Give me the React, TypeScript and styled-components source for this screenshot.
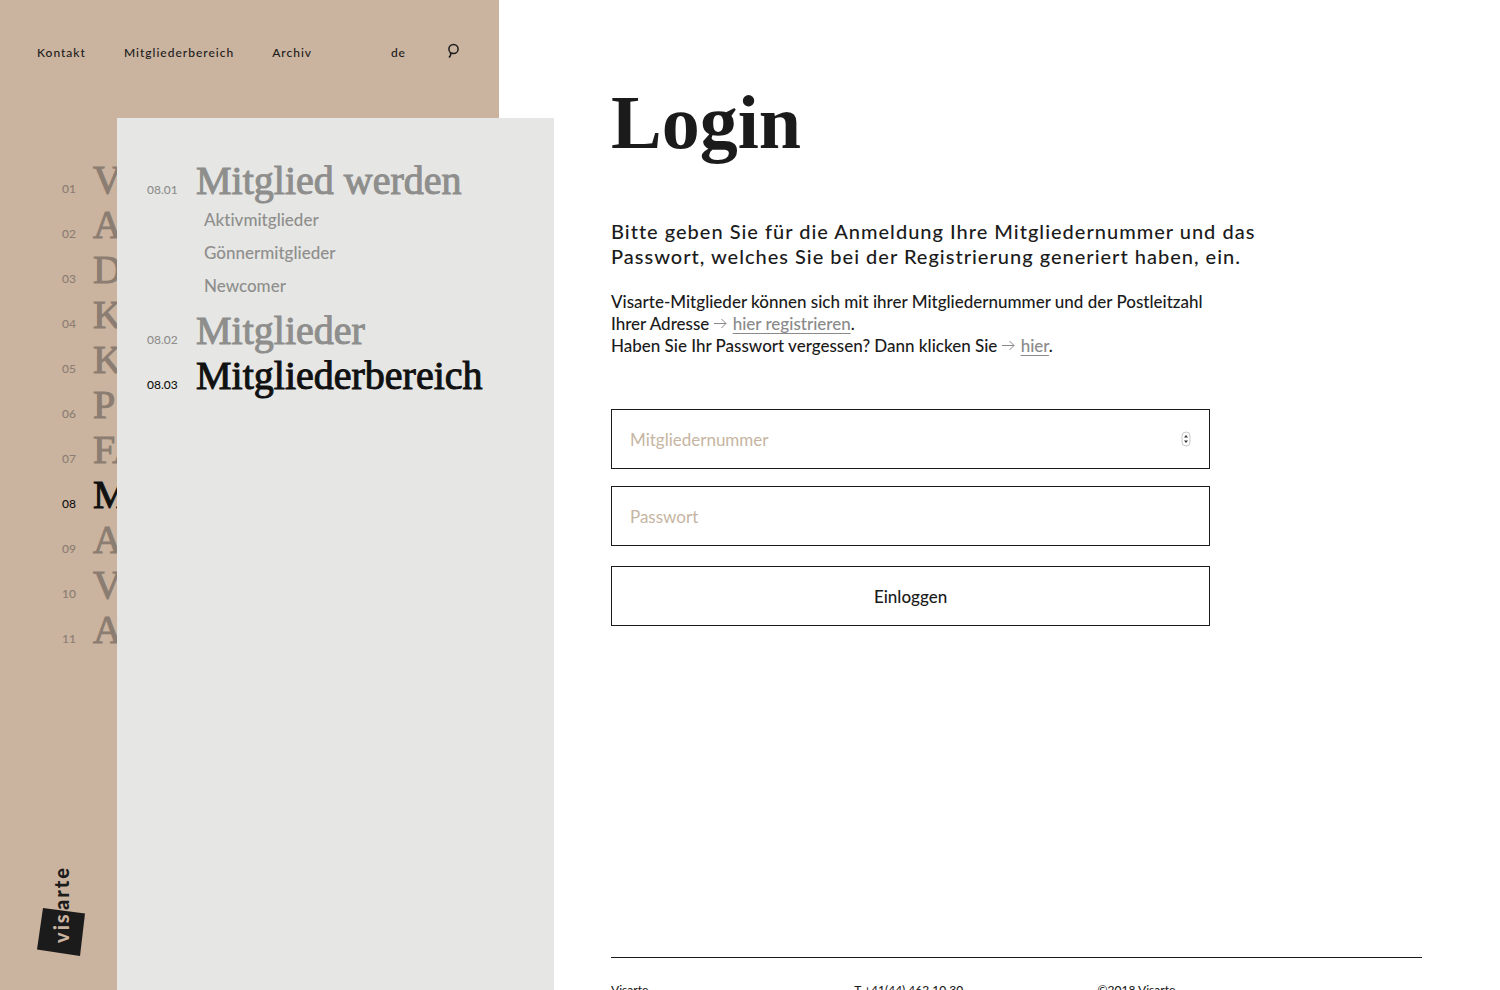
import React from "react";
import styled, { createGlobalStyle } from "styled-components";

const ink = "#1b1b1b";
const sans = `Lato, "Liberation Sans", sans-serif`;
const serif = `"Liberation Serif", "Times New Roman", serif`;

const GlobalStyle = createGlobalStyle`
  *, *::before, *::after { box-sizing: border-box; }
  body {
    margin: 0;
    background: #fff;
    color: ${ink};
    font-family: ${sans};
    font-weight: 500;
    font-variant-ligatures: none;
  }
  a { color: inherit; text-decoration: none; }
  ul { list-style: none; margin: 0; padding: 0; }
`;

const Page = styled.div`
  position: relative;
  display: grid;
  grid-template-columns: calc(100% / 3 - 1px) 1fr;
  height: 100vh;
  overflow: hidden;
`;

const Sidebar = styled.aside`
  display: flex;
  flex-direction: column;
  background: #cab39f;
`;

const TopNav = styled.nav`
  display: flex;
  align-items: center;
  gap: 38px;
  height: 106px;
  padding: 0 39px 0 37px;
  font-size: 12px;
  line-height: 16px;
  letter-spacing: 1px;
`;

const Language = styled.a`
  margin-left: auto;
`;

const SearchButton = styled.button`
  display: flex;
  padding: 0 0 4px;
  border: 0;
  background: none;
  color: ${ink};
`;

const MainMenu = styled.ul`
  padding: 52px 0 0 62px;
`;

const MenuLink = styled.a<{ $active?: boolean; $indent: number }>`
  display: grid;
  grid-template-columns: ${(p) => p.$indent}px 1fr;
  align-items: baseline;
  height: 45px;
  color: ${(p) => (p.$active ? "#111" : "inherit")};
`;

const MenuNumber = styled.span`
  font-size: 12px;
`;

const MenuTitle = styled.span`
  font-family: ${serif};
  font-size: 40px;
  line-height: 44px;
  -webkit-text-stroke: 1px currentColor;
`;

const MutedItem = styled.li<{ $tone: string }>`
  color: ${(p) => p.$tone};
`;

const LogoLink = styled.a`
  margin: auto 0 32px 36px;
  line-height: 0;
`;

const SubPanel = styled.nav`
  position: absolute;
  top: 118px;
  bottom: 0;
  left: 117px;
  width: calc(37% - 118px);
  padding: 41px 0 0 30px;
  background: #e6e6e4;
`;

const SubList = styled.ul`
  margin-top: -1px;
  padding: 0 0 7px 57px;
  font-size: 17px;
  line-height: 33px;
`;

const Main = styled.main`
  height: 100vh;
  padding: 0 78px 0 112px;
  overflow-y: auto;
  scrollbar-width: none;
`;

const Content = styled.div`
  min-height: calc(100vh - 33px);
  padding-top: 77px;
`;

const Title = styled.h1`
  margin: 0 0 52px;
  font-family: ${serif};
  font-size: 76px;
  font-weight: 700;
  line-height: 90px;
`;

const Lead = styled.p`
  max-width: 680px;
  margin: 0 0 22px;
  font-size: 20px;
  line-height: 25px;
  letter-spacing: 1px;
`;

const Copy = styled.p`
  margin: 0 0 52px;
  font-size: 17px;
  line-height: 22px;
`;

const TextLink = styled.a`
  color: #8a8a8a;

  span {
    text-decoration: underline;
    text-decoration-thickness: 1px;
    text-underline-offset: 3px;
    text-decoration-skip-ink: none;
  }
`;

const LinkArrow = styled.svg`
  margin-right: 6px;
`;

const Form = styled.form`
  display: flex;
  flex-direction: column;
  gap: 17px;
  width: calc(74% - 1px);
`;

const Field = styled.label`
  position: relative;
  display: block;
`;

const Input = styled.input`
  display: block;
  width: 100%;
  height: 60px;
  padding: 0 18px;
  border: 1px solid ${ink};
  border-radius: 0;
  background: #fff;
  color: ${ink};
  font: 400 17px ${sans};

  &::placeholder {
    color: #c6b5a2;
    opacity: 1;
  }
`;

const Stepper = styled.svg`
  position: absolute;
  top: 22px;
  right: 18px;
`;

const Submit = styled.button`
  height: 60px;
  margin-top: 3px;
  border: 1px solid ${ink};
  background: #fff;
  color: ${ink};
  font: 500 17px ${sans};
`;

const Footer = styled.footer`
  display: grid;
  grid-template-columns: 30% 30% 1fr;
  padding: 24px 0 48px;
  border-top: 1px solid ${ink};
  font-size: 12px;
  line-height: 16px;
`;

const mainItems = ["V", "A", "D", "K", "K", "P", "FA", "M", "A", "Vo", "A"];
const subPages = ["Aktivmitglieder", "Gönnermitglieder", "Newcomer"];

function Arrow() {
  return (
    <LinkArrow width="13" height="12" viewBox="0 0 13 12" fill="none" stroke="currentColor" aria-hidden="true">
      <path d="M0 5.500h12M7.500 1 12 5.500 7.500 10" />
    </LinkArrow>
  );
}

function Logo() {
  return (
    <svg width="50" height="94" viewBox="0 0 50 94" role="img" aria-label="visarte">
      <path d="M7 44 49 49.500 44 92 1 85.500Z" fill={ink} />
      <g transform="translate(33 79) rotate(-90)" fontFamily="Lato, sans-serif" fontWeight="900" fontSize="20" letterSpacing="2">
        <text fill="#cab39f">vis</text>
        <text x="33" fill={ink}>arte</text>
      </g>
    </svg>
  );
}

export default function App() {
  return (
    <>
      <GlobalStyle />
      <Page>
        <Sidebar>
          <TopNav>
            <a href="#kontakt">Kontakt</a>
            <a href="#mitgliederbereich">Mitgliederbereich</a>
            <a href="#archiv">Archiv</a>
            <Language href="#de">de</Language>
            <SearchButton type="button" aria-label="Suche">
              <svg width="16" height="16" viewBox="0 0 16 16" fill="none" stroke="currentColor" strokeWidth="1.500">
                <circle cx="9.500" cy="6" r="4.600" />
                <path d="M6.500 9.500Q7.500 12 5 14.500" />
              </svg>
            </SearchButton>
          </TopNav>
          <MainMenu>
            {mainItems.map((title, i) => (
              <MutedItem key={i} $tone="#8b7d72">
                <MenuLink href={`#${i + 1}`} $active={i === 7} $indent={31}>
                  <MenuNumber>{String(i + 1).padStart(2, "0")}</MenuNumber>
                  <MenuTitle>{title}</MenuTitle>
                </MenuLink>
              </MutedItem>
            ))}
          </MainMenu>
          <LogoLink href="#start">
            <Logo />
          </LogoLink>
        </Sidebar>

        <Main>
          <Content>
            <Title>Login</Title>
            <Lead>
              Bitte geben Sie für die Anmeldung Ihre Mitgliedernummer und das Passwort, welches Sie bei der
              Registrierung generiert haben, ein.
            </Lead>
            <Copy>
              Visarte-Mitglieder können sich mit ihrer Mitgliedernummer und der Postleitzahl
              <br />
              Ihrer Adresse <TextLink href="#registrieren"><Arrow /><span>hier registrieren</span></TextLink>.
              <br />
              Haben Sie Ihr Passwort vergessen? Dann klicken Sie{" "}
              <TextLink href="#passwort"><Arrow /><span>hier</span></TextLink>.
            </Copy>
            <Form>
              <Field>
                <Input type="text" inputMode="numeric" placeholder="Mitgliedernummer" aria-label="Mitgliedernummer" />
                <Stepper width="11" height="17" viewBox="0 0 11 17" fill="none" aria-hidden="true">
                  <rect x="1" y="1" width="8" height="14" rx="4" stroke="#c8c8c8" />
                  <path d="M3 6.500 5 4l2 2.500zM3 9.500 5 12l2-2.500z" fill="#333" />
                </Stepper>
              </Field>
              <Field>
                <Input type="password" placeholder="Passwort" aria-label="Passwort" />
              </Field>
              <Submit type="button">Einloggen</Submit>
            </Form>
          </Content>
          <Footer>
            <span>Visarte</span>
            <span>T +41(44) 462 10 30</span>
            <span>©2018 Visarte</span>
          </Footer>
        </Main>

        <SubPanel aria-label="Mitglieder">
          <ul>
            <MutedItem $tone="#8e8e8c">
              <MenuLink href="#mitglied-werden" $indent={49}>
                <MenuNumber>08.01</MenuNumber>
                <MenuTitle>Mitglied werden</MenuTitle>
              </MenuLink>
              <SubList>
                {subPages.map((name) => (
                  <li key={name}>
                    <a href={`#${name.toLowerCase()}`}>{name}</a>
                  </li>
                ))}
              </SubList>
            </MutedItem>
            <MutedItem $tone="#8e8e8c">
              <MenuLink href="#mitglieder" $indent={49}>
                <MenuNumber>08.02</MenuNumber>
                <MenuTitle>Mitglieder</MenuTitle>
              </MenuLink>
            </MutedItem>
            <MutedItem $tone="#8e8e8c">
              <MenuLink href="#mitgliederbereich" $active $indent={49}>
                <MenuNumber>08.03</MenuNumber>
                <MenuTitle>Mitgliederbereich</MenuTitle>
              </MenuLink>
            </MutedItem>
          </ul>
        </SubPanel>
      </Page>
    </>
  );
}
